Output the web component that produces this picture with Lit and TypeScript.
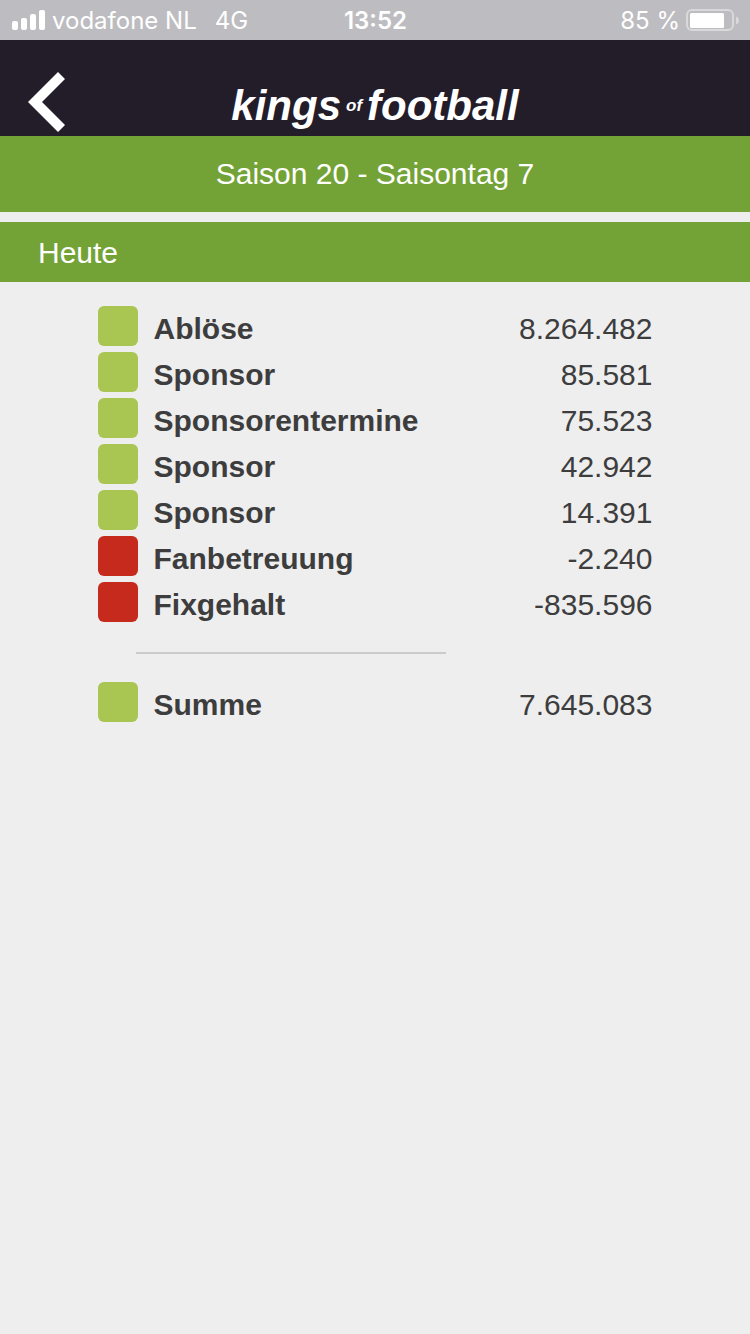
import { LitElement, html, css, svg } from "lit";
import { customElement, property } from "lit/decorators.js";
import { classMap } from "lit/directives/class-map.js";

interface Entry {
  label: string;
  amount: string;
}

const entries: Entry[] = [
  { label: "Ablöse", amount: "8.264.482" },
  { label: "Sponsor", amount: "85.581" },
  { label: "Sponsorentermine", amount: "75.523" },
  { label: "Sponsor", amount: "42.942" },
  { label: "Sponsor", amount: "14.391" },
  { label: "Fanbetreuung", amount: "-2.240" },
  { label: "Fixgehalt", amount: "-835.596" },
];

const total: Entry = { label: "Summe", amount: "7.645.083" };

@customElement("status-bar")
export class StatusBar extends LitElement {
  static styles = css`
    :host {
      display: grid;
      grid-template-columns: 1fr auto 1fr;
      align-items: center;
      height: 40px;
      padding: 0 11px 0 12px;
      background: #bdbcc0;
      color: #fff;
      font: 24px/38px Inter, "Open Sans", sans-serif;
      white-space: nowrap;
    }
    .side {
      display: flex;
      align-items: center;
    }
    .end {
      justify-content: flex-end;
      gap: 6px;
    }
    span {
      padding-top: 2px;
    }
    .carrier {
      margin: 0 18px 0 7px;
    }
    .time {
      font-weight: 600;
    }
    svg {
      display: block;
      flex: none;
    }
  `;

  render() {
    return html`
      <div class="side">
        <svg width="33" height="20" viewBox="0 0 33 20" fill="#fff" aria-hidden="true">
          ${[
            [0, 9],
            [9, 12],
            [18, 16],
            [27, 20],
          ].map(([x, h]) => svg`<rect x=${x} y=${20 - h} width="6" height=${h} rx="2"></rect>`)}
        </svg>
        <span class="carrier">vodafone NL</span>
        <span>4G</span>
      </div>
      <span class="time">13:52</span>
      <div class="side end">
        <span>85 %</span>
        <svg width="53" height="22" viewBox="0 0 53 22" aria-hidden="true">
          <rect x="1" y="1" width="46" height="20" rx="5" fill="none" stroke="#d9d8db" stroke-width="2"></rect>
          <rect x="4" y="4" width="34" height="15" rx="1.5" fill="#fff"></rect>
          <path d="M50 7.5C52.200 8.500 53 9.800 53 11.500S52.200 14.500 50 15.500Z" fill="#d9d8db"></path>
        </svg>
      </div>
    `;
  }
}

@customElement("finance-table")
export class FinanceTable extends LitElement {
  @property({ attribute: false }) entries: Entry[] = [];
  @property({ attribute: false }) total?: Entry;

  static styles = css`
    :host {
      display: block;
      padding: 24px 13%;
    }
    table {
      width: 100%;
      border-collapse: collapse;
      color: #3d3d3e;
      font-size: 30px;
      line-height: 46px;
    }
    th,
    td {
      padding: 0;
      text-align: left;
      vertical-align: top;
      white-space: nowrap;
    }
    .mark {
      width: 56px;
    }
    .swatch {
      display: block;
      width: 40px;
      height: 40px;
      border-radius: 6px;
      background: #a9c552;
    }
    .negative {
      background: #c62a1d;
    }
    .amount {
      text-align: right;
    }
    .divider {
      padding: 24px 0 28px 38px;
    }
    hr {
      width: 60%;
      height: 2px;
      margin: 0;
      border: 0;
      background: #cbcbcb;
    }
  `;

  private row(entry: Entry) {
    const negative = entry.amount.startsWith("-");
    return html`
      <tr>
        <td class="mark"><span class=${classMap({ swatch: true, negative })}></span></td>
        <th scope="row">${entry.label}</th>
        <td class="amount">${entry.amount}</td>
      </tr>
    `;
  }

  render() {
    return html`
      <table>
        <tbody>
          ${this.entries.map((entry) => this.row(entry))}
        </tbody>
        <tfoot>
          <tr>
            <td class="divider" colspan="3"><hr /></td>
          </tr>
          ${this.total ? this.row(this.total) : null}
        </tfoot>
      </table>
    `;
  }
}

@customElement("app-root")
export class AppRoot extends LitElement {
  static styles = css`
    :host {
      display: block;
      min-height: 100vh;
      background: #eee;
      font-family: "Liberation Sans", Helvetica, Arial, sans-serif;
    }
    header {
      display: grid;
      grid-template-columns: 1fr auto 1fr;
      align-items: end;
      height: 96px;
      padding: 0 28px;
      box-sizing: border-box;
      background: #231d2a;
      color: #fff;
    }
    .back {
      justify-self: start;
      padding: 0 0 4px;
      border: 0;
      background: none;
      cursor: pointer;
    }
    .back svg {
      display: block;
    }
    .logo {
      display: flex;
      align-items: center;
      gap: 5px;
      padding-bottom: 6px;
      font-size: 42px;
      font-weight: bold;
      font-style: italic;
      line-height: 48px;
    }
    .of {
      font-size: 17px;
    }
    h1,
    h2 {
      margin: 0;
      background: #73a336;
      color: #fff;
      font-size: 30px;
      font-weight: normal;
    }
    h1 {
      line-height: 76px;
      text-align: center;
    }
    h2 {
      margin-top: 10px;
      padding: 0 38px;
      line-height: 62px;
      height: 60px;
    }
  `;

  render() {
    return html`
      <status-bar></status-bar>
      <header>
        <button class="back" type="button" aria-label="Zurück">
          <svg width="37" height="60" viewBox="0 0 37 60" fill="#fff" aria-hidden="true">
            <path d="M30 0L37 7L14 30L37 53L30 60L0 30Z"></path>
          </svg>
        </button>
        <div class="logo"><span>kings</span><span class="of">of</span><span>football</span></div>
      </header>
      <main>
        <h1>Saison 20 - Saisontag 7</h1>
        <h2>Heute</h2>
        <finance-table .entries=${entries} .total=${total}></finance-table>
      </main>
    `;
  }
}
